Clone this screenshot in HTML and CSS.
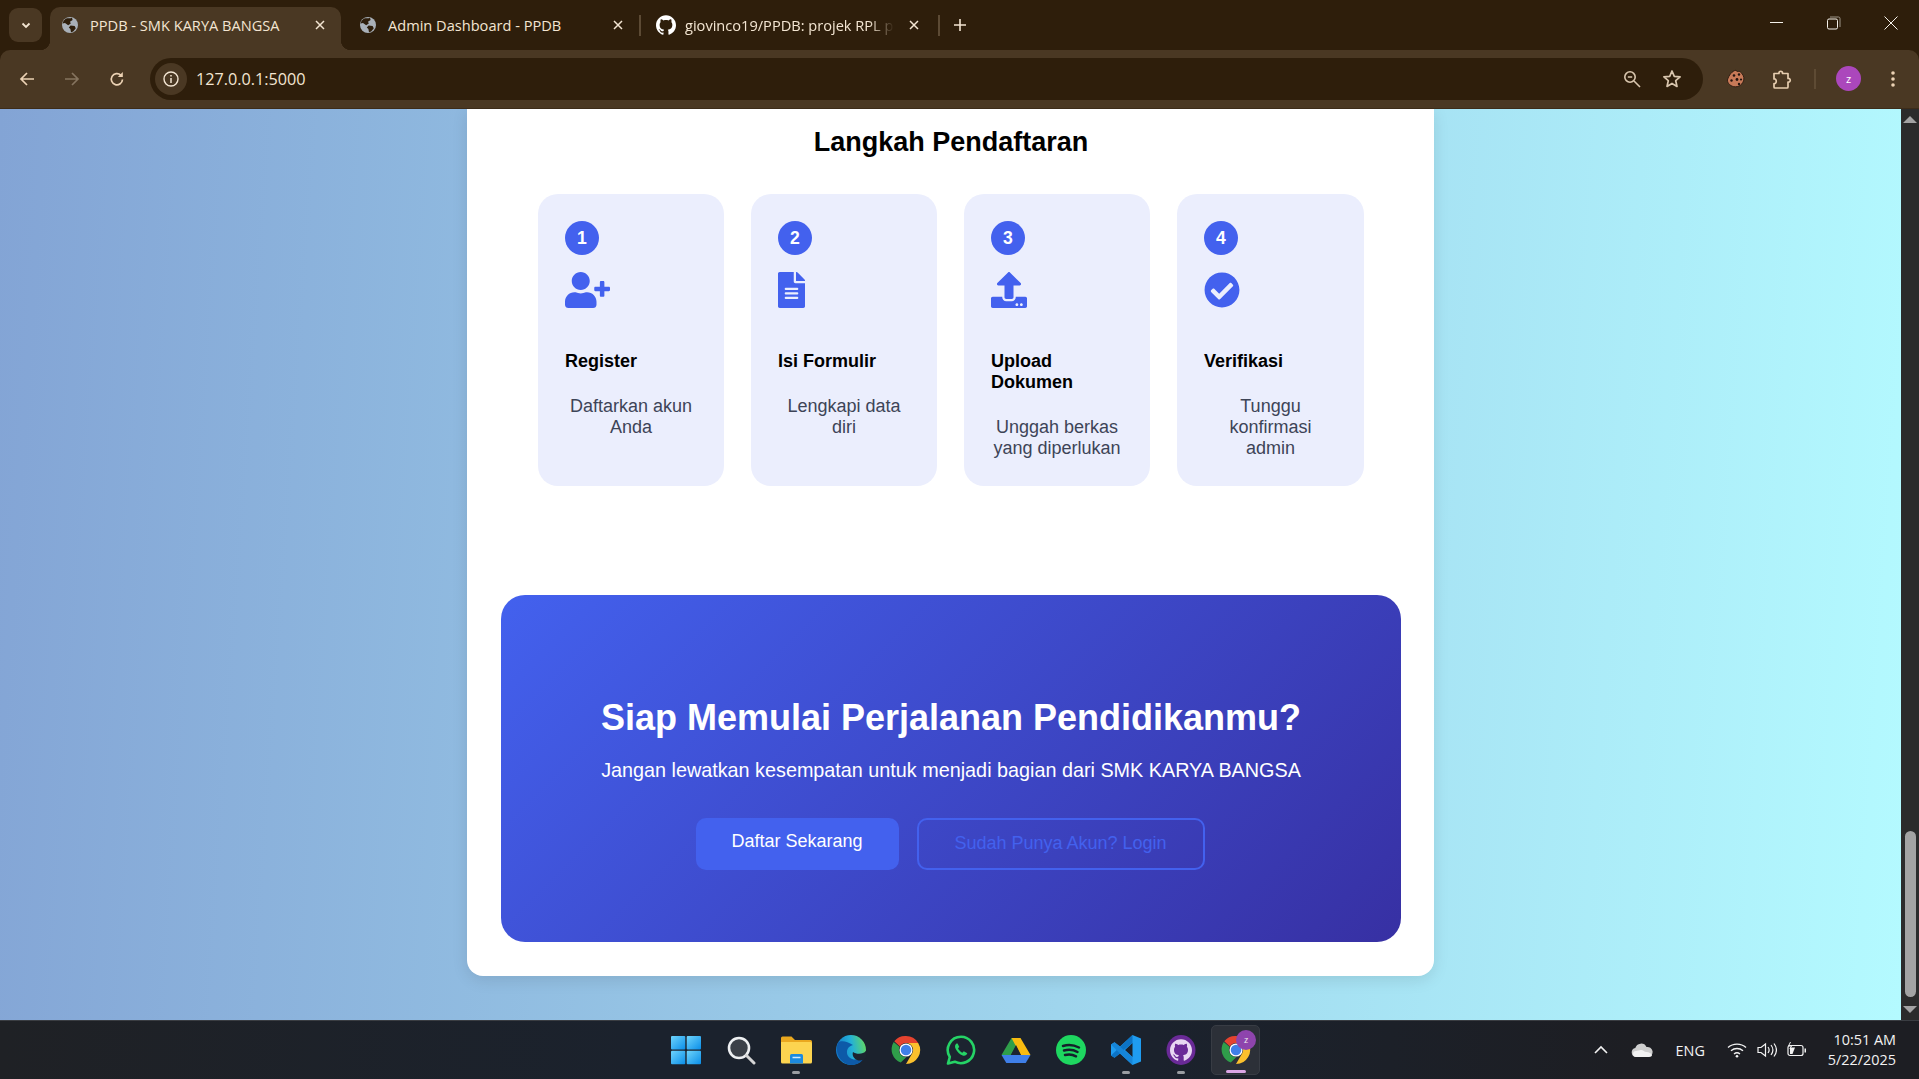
FILE: index.html
```html
<!DOCTYPE html>
<html lang="id">
<head>
<meta charset="utf-8">
<title>PPDB - SMK KARYA BANGSA</title>
<link rel="stylesheet" href="styles.css">
</head>
<body>
<svg class="defs" width="0" height="0" aria-hidden="true">
  <defs>
    <symbol id="globe" viewBox="0 0 16 16">
      <circle cx="8" cy="8" r="8" fill="#a9b0b8"/>
      <path d="M5 1.200c2 .3 4 .2 5-.4l.6 2.200-2.600 1.800.8 1.800-2.600 1.600-3.200-2.200-2.400.6C1 4 2.800 2 5 1.200zM8.600 8.600l4 .4 1.200 2.200-2.600 3.400-2.200.6-.6-3.200-1.600-1.600z" fill="#2e1e0b"/>
    </symbol>
    <symbol id="octo" viewBox="0 0 24 24">
      <path d="M12 .297c-6.630 0-12 5.373-12 12 0 5.303 3.438 9.800 8.205 11.385.6.113.82-.258.82-.577 0-.285-.01-1.040-.015-2.040-3.338.724-4.042-1.610-4.042-1.610C4.422 18.070 3.633 17.700 3.633 17.700c-1.087-.744.084-.729.084-.729 1.205.084 1.838 1.236 1.838 1.236 1.070 1.835 2.809 1.305 3.495.998.108-.776.417-1.305.76-1.605-2.665-.3-5.466-1.332-5.466-5.930 0-1.310.465-2.380 1.235-3.220-.135-.303-.54-1.523.105-3.176 0 0 1.005-.322 3.300 1.230.96-.267 1.980-.399 3-.405 1.020.006 2.040.138 3 .405 2.280-1.552 3.285-1.230 3.285-1.230.645 1.653.24 2.873.12 3.176.765.84 1.230 1.910 1.230 3.220 0 4.610-2.805 5.625-5.475 5.920.42.36.81 1.096.81 2.220 0 1.606-.015 2.896-.03 3.286 0 .315.21.69.825.57C20.565 22.092 24 17.592 24 12.297c0-6.627-5.373-12-12-12"/>
    </symbol>
    <symbol id="chrome" viewBox="0 0 32 32">
      <path d="M16 1a15 15 0 0 1 13 7.500H16a7.500 7.500 0 0 0-6.500 3.750L3.500 6.600A15 15 0 0 1 16 1z" fill="#e5432f"/>
      <path d="M3.500 6.600l6 5.650a7.500 7.500 0 0 0 6.500 11.250L9.500 29.000A15 15 0 0 1 3.500 6.600z" fill="#2f9e4a" transform="rotate(-4 16 16)"/>
      <path d="M29 8.500a15 15 0 0 1-13 22.500l6.500-11.250A7.500 7.500 0 0 0 16 8.500z" fill="#fbc02d"/>
      <circle cx="16" cy="16" r="7" fill="#fff"/>
      <circle cx="16" cy="16" r="5.600" fill="#3f7fe8"/>
    </symbol>
    <linearGradient id="winGrad" x1="0" y1="0" x2="1" y2="1">
      <stop offset="0" stop-color="#6fd4fb"/>
      <stop offset="1" stop-color="#0a8ee8"/>
    </linearGradient>
    <linearGradient id="edgeGrad" x1="0" y1=".6" x2="1" y2=".4">
      <stop offset="0" stop-color="#1277c9"/>
      <stop offset=".55" stop-color="#23b0d8"/>
      <stop offset="1" stop-color="#5fd667"/>
    </linearGradient>
  </defs>
</svg>

<div class="tabstrip">
  <div class="tab-menu">
    <svg width="12" height="12" viewBox="0 0 12 12"><path d="M2.500 4.500 6 8l3.500-3.500" fill="none" stroke="#f3e5d2" stroke-width="1.800"/></svg>
  </div>
  <div class="tab tab-active">
    <svg class="favicon" width="16" height="16"><use href="#globe"/></svg>
    <span class="tab-title">PPDB - SMK KARYA BANGSA</span>
    <svg class="tab-close" width="10" height="10" viewBox="0 0 10 10"><path d="M1 1l8 8M9 1 1 9" stroke="#f3e5d2" stroke-width="1.500"/></svg>
  </div>
  <div class="tab tab-second">
    <svg class="favicon" width="16" height="16"><use href="#globe"/></svg>
    <span class="tab-title">Admin Dashboard - PPDB</span>
    <svg class="tab-close" width="10" height="10" viewBox="0 0 10 10"><path d="M1 1l8 8M9 1 1 9" stroke="#f3e5d2" stroke-width="1.500"/></svg>
  </div>
  <div class="tab-sep"></div>
  <div class="tab tab-third">
    <svg class="favicon favicon-octo" width="20" height="20"><use href="#octo"/></svg>
    <span class="tab-title tab-fade">giovinco19/PPDB: projek RPL pe</span>
    <svg class="tab-close" width="10" height="10" viewBox="0 0 10 10"><path d="M1 1l8 8M9 1 1 9" stroke="#f3e5d2" stroke-width="1.500"/></svg>
  </div>
  <div class="tab-sep"></div>
  <svg class="tab-new" width="14" height="14" viewBox="0 0 14 14"><path d="M7 1v12M1 7h12" stroke="#f3e5d2" stroke-width="1.600"/></svg>
  <div class="win-controls">
    <svg width="14" height="14" viewBox="0 0 14 14"><path d="M0 6.500h13" stroke="#f5f1ea" stroke-width="1"/></svg>
    <svg width="14" height="14" viewBox="0 0 14 14"><rect x=".5" y="3" width="10" height="10" rx="1.500" fill="none" stroke="#f5f1ea"/><path d="M3 1h8.500a1.500 1.500 0 0 1 1.500 1.500V11" fill="none" stroke="#9c9488"/></svg>
    <svg width="14" height="14" viewBox="0 0 14 14"><path d="M.5.500l13 13M13.500.500l-13 13" stroke="#f5f1ea" stroke-width="1"/></svg>
  </div>
</div>

<div class="toolbar">
  <svg class="nav-icon" width="16" height="16" viewBox="0 0 16 16"><path d="M15 8H2M8 2 2 8l6 6" fill="none" stroke="#ecd2b4" stroke-width="1.700"/></svg>
  <svg class="nav-icon" width="16" height="16" viewBox="0 0 16 16"><path d="M1 8h13M8 2l6 6-6 6" fill="none" stroke="#85745f" stroke-width="1.700"/></svg>
  <svg class="nav-icon" width="16" height="16" viewBox="0 0 16 16"><path d="M13.500 8.500a5.600 5.600 0 1 1-1.700-4.300" fill="none" stroke="#ecd2b4" stroke-width="1.700"/><path d="M13.800 1v5h-5z" fill="#ecd2b4"/></svg>
  <div class="omnibox">
    <div class="site-info">
      <svg width="18" height="18" viewBox="0 0 18 18"><circle cx="9" cy="9" r="7" fill="none" stroke="#f3e5d2" stroke-width="1.400"/><path d="M9 8v5M9 5v1.600" stroke="#f3e5d2" stroke-width="1.500"/></svg>
    </div>
    <span class="url">127.0.0.1:5000</span>
    <svg class="omni-zoom" width="18" height="18" viewBox="0 0 18 18"><circle cx="7" cy="7" r="5.200" fill="none" stroke="#d9c6ae" stroke-width="1.600"/><path d="M11 11l6 6" stroke="#d9c6ae" stroke-width="1.600"/><path d="M4.800 7h4.400" stroke="#d9c6ae" stroke-width="1.500"/></svg>
    <svg class="omni-star" width="20" height="20" viewBox="0 0 20 20"><path d="M10 2l2.300 5.400 5.800.5-4.400 3.800 1.300 5.700-5-3-5 3 1.300-5.700L1.900 7.900l5.800-.5z" fill="none" stroke="#d9c6ae" stroke-width="1.700" stroke-linejoin="round"/></svg>
  </div>
  <svg class="ext-cookie" width="20" height="20" viewBox="0 0 20 20"><path d="M10 1.200c.6 1.800 2.200 1.300 3.200 1.100 1.300.5 4 3 4.600 6 .6 4.800-3 9.500-8.400 9.500C5 17.800 1.400 14.500 1.400 11 3 6 6 2 10 1.200z" fill="#c87a58" stroke="#2a1a10" stroke-width=".9"/><circle cx="8" cy="6.500" r="1.300" fill="#241510"/><circle cx="13" cy="5.500" r="1.200" fill="#241510"/><circle cx="11" cy="10.500" r="1.400" fill="#241510"/><circle cx="5.500" cy="11.500" r="1.200" fill="#241510"/><circle cx="15" cy="10.500" r="1.100" fill="#241510"/><circle cx="13" cy="15" r="1.200" fill="#241510"/></svg>
  <svg class="ext-puzzle" width="22" height="22" viewBox="0 0 22 22"><path d="M3 5.500h5c-.5-3 4-3 3.500 0H17v5c3-.5 3 4 0 3.500V19a1 1 0 0 1-1 1H4a1 1 0 0 1-1-1v-3.500c3 .6 3-5 0-4.500z" fill="none" stroke="#e6cdaf" stroke-width="1.700" stroke-linejoin="round"/></svg>
  <div class="tool-sep"></div>
  <div class="avatar">z</div>
  <svg class="kebab" width="6" height="18" viewBox="0 0 6 18"><circle cx="3" cy="3" r="1.800" fill="#ecd2b4"/><circle cx="3" cy="9" r="1.800" fill="#ecd2b4"/><circle cx="3" cy="15" r="1.800" fill="#ecd2b4"/></svg>
</div>

<div class="viewport">
  <div class="page">
    <main class="sheet">
      <h2 class="steps-title">Langkah Pendaftaran</h2>
      <section class="steps">
        <article class="step">
          <div class="step-num">1</div>
          <svg class="step-icon" width="45" height="36" viewBox="0 0 640 512"><path d="M624 208h-64v-64c0-8.800-7.200-16-16-16h-32c-8.800 0-16 7.200-16 16v64h-64c-8.800 0-16 7.200-16 16v32c0 8.800 7.200 16 16 16h64v64c0 8.800 7.200 16 16 16h32c8.800 0 16-7.200 16-16v-64h64c8.800 0 16-7.200 16-16v-32c0-8.800-7.200-16-16-16zm-400 48c70.700 0 128-57.300 128-128S294.700 0 224 0 96 57.300 96 128s57.300 128 128 128zm89.600 32h-16.700c-22.200 10.200-46.900 16-72.900 16s-50.600-5.800-72.900-16h-16.700C60.200 288 0 348.200 0 422.400V464c0 26.500 21.500 48 48 48h352c26.500 0 48-21.500 48-48v-41.600c0-74.200-60.200-134.400-134.400-134.400z"/></svg>
          <h3 class="step-name">Register</h3>
          <p class="step-desc">Daftarkan akun Anda</p>
        </article>
        <article class="step">
          <div class="step-num">2</div>
          <svg class="step-icon" width="27" height="36" viewBox="0 0 384 512"><path d="M224 136V0H24C10.700 0 0 10.700 0 24v464c0 13.300 10.700 24 24 24h336c13.300 0 24-10.700 24-24V160H248c-13.200 0-24-10.800-24-24zm64 236c0 6.600-5.400 12-12 12H108c-6.600 0-12-5.400-12-12v-8c0-6.600 5.400-12 12-12h168c6.600 0 12 5.400 12 12v8zm0-64c0 6.600-5.400 12-12 12H108c-6.600 0-12-5.400-12-12v-8c0-6.600 5.400-12 12-12h168c6.600 0 12 5.400 12 12v8zm0-72v8c0 6.600-5.400 12-12 12H108c-6.600 0-12-5.400-12-12v-8c0-6.600 5.400-12 12-12h168c6.600 0 12 5.400 12 12zm96-114.100v6.100H256V0h6.100c6.400 0 12.500 2.500 17 7l97.900 98c4.500 4.500 7 10.600 7 16.900z"/></svg>
          <h3 class="step-name">Isi Formulir</h3>
          <p class="step-desc">Lengkapi data diri</p>
        </article>
        <article class="step">
          <div class="step-num">3</div>
          <svg class="step-icon" width="36" height="36" viewBox="0 0 512 512"><path d="M296 384h-80c-13.300 0-24-10.700-24-24V192h-87.700c-17.800 0-26.700-21.500-14.100-34.100L242.300 5.700c7.500-7.500 19.800-7.500 27.300 0l152.200 152.200c12.600 12.600 3.700 34.100-14.100 34.100H320v168c0 13.300-10.700 24-24 24zm216-8v112c0 13.300-10.700 24-24 24H24c-13.300 0-24-10.700-24-24V376c0-13.300 10.700-24 24-24h136v8c0 30.900 25.100 56 56 56h80c30.900 0 56-25.100 56-56v-8h136c13.300 0 24 10.700 24 24zm-124 88c0-11-9-20-20-20s-20 9-20 20 9 20 20 20 20-9 20-20zm64 0c0-11-9-20-20-20s-20 9-20 20 9 20 20 20 20-9 20-20z"/></svg>
          <h3 class="step-name">Upload Dokumen</h3>
          <p class="step-desc">Unggah berkas yang diperlukan</p>
        </article>
        <article class="step">
          <div class="step-num">4</div>
          <svg class="step-icon" width="36" height="36" viewBox="0 0 512 512"><path d="M504 256c0 136.967-111.033 248-248 248S8 392.967 8 256 119.033 8 256 8s248 111.033 248 248zM227.314 387.314l184-184c6.248-6.248 6.248-16.379 0-22.627l-22.627-22.627c-6.248-6.249-16.379-6.249-22.628 0L216 308.118l-70.059-70.059c-6.248-6.248-16.379-6.248-22.628 0l-22.627 22.627c-6.248 6.248-6.248 16.379 0 22.627l104 104c6.249 6.250 16.379 6.250 22.628.001z"/></svg>
          <h3 class="step-name">Verifikasi</h3>
          <p class="step-desc">Tunggu konfirmasi admin</p>
        </article>
      </section>
      <section class="cta">
        <h2 class="cta-title">Siap Memulai Perjalanan Pendidikanmu?</h2>
        <p class="cta-text">Jangan lewatkan kesempatan untuk menjadi bagian dari SMK KARYA BANGSA</p>
        <div class="cta-actions">
          <a class="btn btn-primary">Daftar Sekarang</a>
          <a class="btn btn-outline">Sudah Punya Akun? Login</a>
        </div>
      </section>
    </main>
  </div>
  <div class="scrollbar">
    <div class="arrow-up"></div>
    <div class="track"><div class="thumb"></div></div>
    <div class="arrow-down"></div>
  </div>
</div>

<footer class="taskbar">
  <div class="task-left"></div>
  <div class="task-center">
    <div class="task-item">
      <svg width="30" height="30" viewBox="0 0 30 30"><rect x="0" y="1" width="14.300" height="13.500" rx="1" fill="url(#winGrad)"/><rect x="15.700" y="1" width="14.300" height="13.500" rx="1" fill="url(#winGrad)"/><rect x="0" y="15.700" width="14.300" height="13.500" rx="1" fill="url(#winGrad)"/><rect x="15.700" y="15.700" width="14.300" height="13.500" rx="1" fill="url(#winGrad)"/></svg>
    </div>
    <div class="task-item">
      <svg width="30" height="30" viewBox="0 0 30 30"><circle cx="13" cy="13" r="10" fill="#3b4048" stroke="#eef0f2" stroke-width="2.600"/><path d="M20.500 20.500 28 28" stroke="#d5d5d5" stroke-width="3" stroke-linecap="round"/></svg>
    </div>
    <div class="task-item task-open">
      <svg width="32" height="30" viewBox="0 0 32 30"><path d="M1 3a1.500 1.500 0 0 1 1.500-1.500h9L15 5h15.500A1.500 1.500 0 0 1 32 6.500V10H1z" fill="#eaa81f"/><path d="M1 7h29.500A1.500 1.500 0 0 1 32 8.500V27a1.500 1.500 0 0 1-1.500 1.500h-28A1.500 1.500 0 0 1 1 27z" fill="#fcd450"/><path d="M10 20.500a1.500 1.500 0 0 1 1.500-1.500h10a1.500 1.500 0 0 1 1.500 1.500v8H10z" fill="#1c8adf"/><path d="M12.500 22.500h8" stroke="#cfeaff" stroke-width="1.500"/></svg>
    </div>
    <div class="task-item">
      <svg width="30" height="30" viewBox="0 0 30 30"><circle cx="15" cy="15" r="15" fill="url(#edgeGrad)"/><path d="M2 7.500C-1.500 17 3.500 29 15 30c5.500.3 10.500-2.500 13-7-6 3-14.500 2-16.500-3-1.800-4.500 1-9 5.500-10C11 6 5 5 2 7.500z" fill="#0d5aa8"/><path d="M30.500 15C28 20 20 19.500 17 17c-1.500 4 2 8.500 7 8.500 2.500 0 5-1 6.500-3.500z" fill="#1c2430"/></svg>
    </div>
    <div class="task-item">
      <svg width="30" height="30"><use href="#chrome"/></svg>
    </div>
    <div class="task-item">
      <svg width="30" height="30" viewBox="0 0 30 30"><path d="M15 1.800A13.200 13.200 0 0 0 3.800 22L2 28.500l6.800-1.800A13.200 13.200 0 1 0 15 1.800z" fill="#1c2430" stroke="#25d366" stroke-width="2.600" stroke-linejoin="round"/><path d="M10.500 8.500c-1.500 1.200-2 3-.8 5.500 1.500 3 4 5.300 7 6.500 2.300.8 4-.5 4.600-2.200l-3.500-2-1.500 1.400c-1.800-.8-3.500-2.500-4.300-4.400l1.300-1.300-1.700-3.500z" fill="#25d366"/></svg>
    </div>
    <div class="task-item">
      <svg width="30" height="28" viewBox="0 0 30 28"><path d="M10.500 2h9L9.500 19.500l-4.500-.2-4.500-.3z" fill="#2f9e4a"/><path d="M19.500 2 29.500 19l-9.500.5L10.500 2z" fill="#f9bb10"/><path d="M.5 19h29l-4.800 8H5.300z" fill="#3f7fe8"/><path d="M15 9l5 10H10z" fill="#1c2430"/></svg>
    </div>
    <div class="task-item">
      <svg width="30" height="30" viewBox="0 0 30 30"><circle cx="15" cy="15" r="15" fill="#1ed760"/><path d="M7 11c5-1.500 11-1 16 1.500M8 15.500c4.500-1.200 9.500-.8 13.500 1.500M9 20c3.700-1 7.500-.7 11 1.300" fill="none" stroke="#15202b" stroke-width="2.500" stroke-linecap="round"/></svg>
    </div>
    <div class="task-item task-open">
      <svg width="30" height="30" viewBox="0 0 30 30"><path d="M21.500 0 30 3.500v23L21.500 30 9 18.500l-5.500 4.200L0 20.500v-11l3.500-2.200L9 11.500zM21.500 8 14 15l7.500 7z" fill="#1f9cf0"/><path d="M21.500 0v8L3.500 22.700 0 20.500z" fill="#0a6fc0" opacity=".9"/><path d="M0 9.500l3.500-2.200L21.500 22v8L9 18.500z" fill="#1685d8"/></svg>
    </div>
    <div class="task-item task-open">
      <svg width="30" height="30" viewBox="0 0 30 30"><ellipse cx="15" cy="15" rx="14.500" ry="15" fill="#6a2a97"/><svg x="4" y="4" width="22" height="22" class="task-octo"><use href="#octo"/></svg></svg>
    </div>
    <div class="task-item task-active">
      <svg width="30" height="30"><use href="#chrome"/></svg>
      <div class="task-badge">z</div>
    </div>
  </div>
  <div class="task-right">
    <svg class="tray-chevron" width="16" height="10" viewBox="0 0 16 10"><path d="M2 8l6-6 6 6" fill="none" stroke="#f2f2f2" stroke-width="1.600"/></svg>
    <svg class="tray-cloud" width="22" height="14" viewBox="0 0 22 14"><path d="M5 14a4.500 4.500 0 0 1-.7-8.900A6 6 0 0 1 15.500 4 5 5 0 0 1 17.500 14z" fill="#cfcfcf"/><path d="M5 14a3 3 0 0 1 0-6c2 0 3-1 5-1 2.500 0 3 2 5.500 2 2.500 0 5 1.500 5.500 3 0 1-1 2-3.500 2z" fill="#f2f2f2"/></svg>
    <span class="tray-lang">ENG</span>
    <svg class="tray-wifi" width="20" height="16" viewBox="0 0 20 16"><path d="M1 5.500c5-4.500 13-4.500 18 0M4 8.800c3.500-3 8.500-3 12 0M7 12c1.800-1.400 4.200-1.400 6 0" fill="none" stroke="#f2f2f2" stroke-width="1.400"/><circle cx="10" cy="14.300" r="1.300" fill="#f2f2f2"/></svg>
    <svg class="tray-sound" width="20" height="16" viewBox="0 0 20 16"><path d="M1 5.500h3L8.500 2v12L4 10.500H1z" fill="none" stroke="#f2f2f2" stroke-width="1.200"/><path d="M11 5c1.300 1.700 1.300 4.300 0 6M14 3c2.300 3 2.300 7 0 10M17 1.500c3 4 3 9 0 13" fill="none" stroke="#f2f2f2" stroke-width="1.200"/></svg>
    <svg class="tray-batt" width="20" height="16" viewBox="0 0 20 16"><rect x="1" y="3.500" width="15" height="10" rx="2" fill="none" stroke="#f2f2f2" stroke-width="1.200"/><path d="M17.500 6.500h1.500v4h-1.500z" fill="#f2f2f2"/><path d="M3 12V5.500h5L5.500 12z" fill="#f2f2f2"/><path d="M3.500 0 1.500 4h3L2.800 7" fill="none" stroke="#f2f2f2" stroke-width="1"/></svg>
    <div class="clock"><span>10:51 AM</span><span>5/22/2025</span></div>
  </div>
</footer>
</body>
</html>
```
FILE: styles.css
```css
* { box-sizing: border-box; }
html, body { margin: 0; height: 100%; overflow: hidden; }
body {
  display: flex;
  flex-direction: column;
  height: 1079px;
  font-family: "Liberation Sans", Arial, sans-serif;
  background: #2e1e0b;
}
.defs { position: absolute; }

/* browser chrome */
.tabstrip {
  flex: none;
  height: 50px;
  display: flex;
  align-items: flex-end;
  background: #2e1e0b;
  font-family: "Open Sans", "Noto Sans", sans-serif;
  color: #f3e5d2;
  padding-left: 9px;
}
.tab-menu {
  width: 33px;
  height: 34px;
  margin: 0 8px 8px 0;
  background: #4a3823;
  border-radius: 9px;
  display: flex;
  align-items: center;
  justify-content: center;
}
.tab {
  height: 43px;
  display: flex;
  align-items: center;
  flex: none;
  padding-bottom: 7px;
}
.tab-active {
  width: 291px;
  padding-left: 12px;
  background: #4a3823;
  border-radius: 10px 10px 0 0;
  position: relative;
}
.tab-active::before, .tab-active::after {
  content: "";
  position: absolute;
  bottom: 0;
  width: 10px;
  height: 10px;
}
.tab-active::before {
  left: -10px;
  background: radial-gradient(circle at 0 0, transparent 10px, #4a3823 10.500px);
}
.tab-active::after {
  right: -10px;
  background: radial-gradient(circle at 100% 0, transparent 10px, #4a3823 10.500px);
}
.tab-second { width: 298px; padding-left: 19px; }
.tab-third { width: 297px; padding-left: 15px; }
.favicon { flex: none; fill: #fff; }
.tab-title {
  font-size: 14.600px;
  white-space: nowrap;
  margin-left: 12px;
  flex: 1;
  min-width: 0;
}
.tab-fade {
  margin-left: 9px;
  -webkit-mask-image: linear-gradient(90deg, #000 88%, transparent 100%);
  mask-image: linear-gradient(90deg, #000 88%, transparent 100%);
}
.tab-close { flex: none; margin: 0 16px 0 19px; }
.tab-third .tab-close { margin: 0 19px 0 15px; }
.tab-sep {
  width: 2px;
  height: 21px;
  background: #5c4a34;
  margin: 0 0 14px 0;
  flex: none;
}
.tab-new { margin: 0 0 18px 13px; flex: none; }
.win-controls {
  margin-left: auto;
  align-self: stretch;
  display: flex;
  align-items: center;
  gap: 43px;
  padding: 0 21px 5px 0;
}

.toolbar {
  flex: none;
  height: 59px;
  background: #4a3823;
  border-radius: 10px 10px 0 0;
  display: flex;
  align-items: center;
  padding: 0 0 1px 19px;
  position: relative;
  border-bottom: 1px solid #3d2c19;
}
.nav-icon { flex: none; margin-right: 29px; }
.nav-icon:nth-of-type(3) { margin-right: 0; }
.omnibox {
  width: 1553px;
  height: 42px;
  margin-left: 25px;
  background: #2e1e0b;
  border-radius: 21px;
  display: flex;
  align-items: center;
  padding-left: 5px;
  color: #f3e5d2;
  flex: none;
}
.site-info {
  width: 32px;
  height: 32px;
  border-radius: 50%;
  background: #4a3823;
  display: flex;
  align-items: center;
  justify-content: center;
  flex: none;
}
.url {
  margin-left: 9px;
  font: 16.200px "Open Sans", "Noto Sans", sans-serif;
  flex: 1;
}
.omni-zoom { flex: none; margin-right: 21px; }
.omni-star { flex: none; margin-right: 21px; }
.ext-cookie { flex: none; margin-left: 23px; }
.ext-puzzle { flex: none; margin-left: 25px; }
.tool-sep {
  width: 2px;
  height: 20px;
  background: #5e4b34;
  margin-left: 21px;
  flex: none;
}
.avatar {
  width: 25px;
  height: 25px;
  margin-left: 20px;
  border-radius: 50%;
  background: #ab47bc;
  color: #fff;
  font: 11px/25px "Open Sans", sans-serif;
  text-align: center;
  flex: none;
}
.kebab { flex: none; margin-left: 29px; }

/* page area */
.viewport {
  flex: 1;
  min-height: 0;
  display: flex;
}
.page {
  flex: 1;
  min-width: 0;
  background: linear-gradient(94deg, #83a4d5 0%, #b4faff 100%);
  display: flex;
  justify-content: center;
  align-items: flex-start;
}
.sheet {
  width: 967px;
  height: 867px;
  background: #fff;
  border-radius: 0 0 16px 16px;
  box-shadow: 0 4px 16px rgba(0, 0, 0, .1);
  padding: 0 33px 34px 34px;
}
.steps-title {
  margin: 0;
  padding-top: 16px;
  height: 85px;
  font-size: 27px;
  line-height: 34px;
  text-align: center;
  color: #000;
}
.steps {
  display: grid;
  grid-template-columns: repeat(3, 186px) 187px;
  gap: 27px;
  margin: 0 37px;
}
.step {
  background: #ebeefd;
  border-radius: 20px;
  padding: 27px;
  height: 292px;
}
.step-num {
  width: 34px;
  height: 34px;
  border-radius: 50%;
  background: #4361ee;
  color: #fff;
  font-weight: 700;
  font-size: 17.600px;
  line-height: 34px;
  text-align: center;
}
.step-icon {
  display: block;
  margin-top: 17px;
  fill: #4361ee;
}
.step-name {
  margin: 43px 0 24px;
  font-size: 18px;
  line-height: 21px;
  color: #000;
}
.step-desc {
  margin: 0;
  font-size: 18px;
  line-height: 21px;
  color: #3d4457;
  text-align: center;
}
.cta {
  margin-top: 109px;
  height: 347px;
  border-radius: 24px;
  background: linear-gradient(135deg, #4361ee 0%, #3730a3 100%);
  color: #fff;
  text-align: center;
  padding-top: 102px;
}
.cta-title {
  margin: 0;
  font-size: 36px;
  line-height: 42px;
}
.cta-text {
  margin: 20px 0 0;
  font-size: 19.800px;
  line-height: 23px;
}
.cta-actions {
  display: flex;
  justify-content: center;
  gap: 18px;
  margin-top: 36px;
  padding-right: 2px;
}
.btn {
  height: 52px;
  border-radius: 10px;
  font-size: 18px;
  text-align: center;
}
.btn-primary {
  width: 203px;
  background: #4361ee;
  color: #fff;
  line-height: 46px;
}
.btn-outline {
  width: 288px;
  border: 2px solid #4361ee;
  color: #4361ee;
  line-height: 46px;
}

.scrollbar {
  flex: none;
  width: 18px;
  background: #2b2b2b;
  display: flex;
  flex-direction: column;
  align-items: center;
}
.arrow-up, .arrow-down {
  flex: none;
  width: 0;
  height: 0;
  border-left: 7px solid transparent;
  border-right: 7px solid transparent;
  margin: 7px 0;
}
.arrow-up { border-bottom: 7px solid #a3a3a3; }
.arrow-down { border-top: 7px solid #a3a3a3; }
.track { flex: 1; width: 100%; padding-top: 701px; padding-bottom: 2px; }
.thumb { height: 100%; margin: 0 3px 0 4px; background: #a3a3a3; border-radius: 6px; }

/* windows taskbar */
.taskbar {
  flex: none;
  height: 59px;
  background: linear-gradient(90deg, #1f2125 0%, #1b222d 33%, #1b222d 60%, #1d1e23 85%);
  border-top: 1px solid #3a3d42;
  display: grid;
  grid-template-columns: 1fr auto 1fr;
  align-items: center;
}
.task-center { display: flex; padding-left: 2px; }
.task-item {
  width: 55px;
  height: 50px;
  display: flex;
  align-items: center;
  justify-content: center;
  position: relative;
}
.task-open::after, .task-active::after {
  content: "";
  position: absolute;
  left: 50%;
  bottom: 1px;
  width: 8px;
  height: 3px;
  margin-left: -4px;
  border-radius: 2px;
  background: #9a9da2;
}
.task-active {
  width: 49px;
  margin: 0 3px;
  background: #2c3038;
  border: 1px solid #383c44;
  border-radius: 5px;
}
.task-active::after {
  width: 20px;
  margin-left: -10px;
  background: #dba6e6;
}
.task-octo { fill: #e8d8f2; }
.task-badge {
  position: absolute;
  top: 4px;
  right: 3px;
  width: 20px;
  height: 20px;
  border-radius: 50%;
  background: #8e44ad;
  color: #eee;
  font: 9px/20px "Open Sans", sans-serif;
  text-align: center;
}
.task-right {
  display: flex;
  align-items: center;
  justify-content: flex-end;
  color: #f2f2f2;
  font-family: "Open Sans", "Noto Sans", sans-serif;
  padding-right: 23px;
}
.tray-lang { font-size: 14.400px; margin-left: 23px; }
.tray-cloud { margin-left: 22px; }
.tray-wifi { margin-left: 22px; }
.tray-sound { margin-left: 10px; }
.tray-batt { margin-left: 10px; }
.clock {
  display: flex;
  flex-direction: column;
  align-items: flex-end;
  font-size: 14.400px;
  line-height: 20px;
  margin-left: 21px;
}
```
